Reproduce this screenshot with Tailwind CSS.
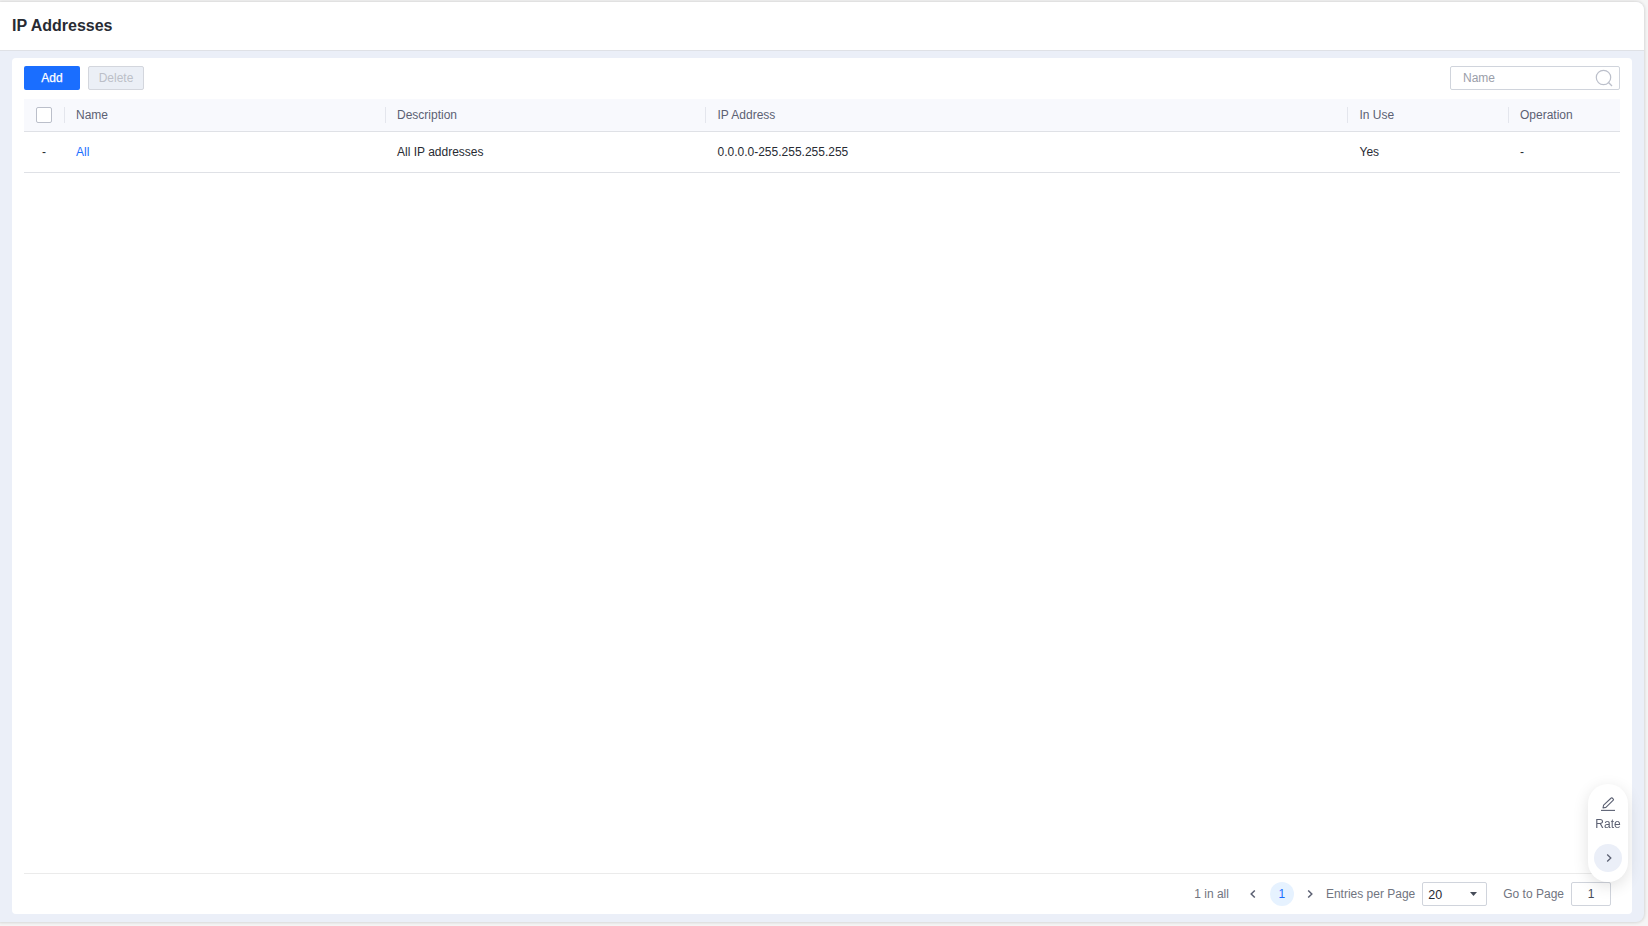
<!DOCTYPE html>
<html lang="en">
<head>
    <meta charset="UTF-8">
    <meta name="viewport" content="width=device-width, initial-scale=1.0">
    <title>IP Addresses</title>
    <script src="https://cdn.jsdelivr.net/npm/@tailwindcss/browser@4"></script>
</head>
<body class="bg-[#f5f5f5] h-screen overflow-hidden font-['Liberation_Sans',Arial,sans-serif] text-xs text-[#282b33]">
    <div class="h-full pt-[2px] pr-[4px] pb-[4px]">
        <div class="h-full flex flex-col bg-[#ebeff8] rounded-r-lg overflow-hidden shadow-[0_0_3px_1px_rgba(0,0,0,0.12)]">
            <header class="h-[49px] shrink-0 bg-white border-b border-[#dfe1e6] flex items-center pl-3">
                <h1 class="text-base font-bold leading-5">IP Addresses</h1>
            </header>

            <main class="flex-1 mt-[7px] ml-3 mr-3 mb-2 bg-white rounded flex flex-col px-3 pt-2">
                <!-- Toolbar -->
                <div class="flex items-center gap-2 h-6 shrink-0">
                    <button class="w-14 h-6 bg-[#1a6eff] text-white rounded-[2px] [-webkit-text-stroke:0.25px_white]">Add</button>
                    <button class="w-14 h-6 bg-[#ebeff6] border border-[#d3d6dd] text-[#bcbfc8] rounded-[2px]" disabled>Delete</button>
                    <div class="ml-auto w-[170px] h-6 border border-[#d0d4dc] rounded-[2px] flex items-center justify-between pl-3 pr-[6px]">
                        <span class="text-[#9a9ea9]">Name</span>
                        <svg class="w-[18px] h-[18px]" viewBox="0 0 18 18" fill="none" stroke="#bbbfca" stroke-width="1.2">
                            <circle cx="8.5" cy="8.5" r="7.2"></circle>
                            <path d="M13 13l4 4"></path>
                        </svg>
                    </div>
                </div>

                <!-- Table -->
                <div class="mt-[9px] grid grid-cols-[40px_321px_320px_642px_161px_112px] items-center h-[33px] shrink-0 bg-[#f8f9fd] border-b border-[#dfe1e6] text-[#5c6173]">
                    <div class="pl-3"><div class="w-4 h-4 bg-white border border-[#bbbfca] rounded-[2px]"></div></div>
                    <div class="h-4 leading-4 border-l border-[#e4e6ed] pl-[11px]">Name</div>
                    <div class="h-4 leading-4 border-l border-[#e4e6ed] pl-[11px]">Description</div>
                    <div class="h-4 leading-4 border-l border-[#e4e6ed] pl-[11.5px]">IP Address</div>
                    <div class="h-4 leading-4 border-l border-[#e4e6ed] pl-[11.5px]">In Use</div>
                    <div class="h-4 leading-4 border-l border-[#e4e6ed] pl-[11px]">Operation</div>
                </div>
                <div class="grid grid-cols-[40px_321px_320px_642px_161px_112px] items-center h-[41px] shrink-0 border-b border-[#dfe1e6]">
                    <div class="text-center">-</div>
                    <div class="pl-3"><a href="#" class="text-[#1a6eff]">All</a></div>
                    <div class="pl-3">All IP addresses</div>
                    <div class="pl-[12.5px]">0.0.0.0-255.255.255.255</div>
                    <div class="pl-[12.5px]">Yes</div>
                    <div class="pl-3">-</div>
                </div>

                <!-- Pagination -->
                <div class="mt-auto h-[41px] shrink-0 border-t border-[#ebebeb] flex items-center justify-end pr-[9px] text-[#71757f]">
                    <span>1 in all</span>
                    <svg class="ml-[21px] w-[6px] h-[8px]" viewBox="0 0 6 8" fill="none" stroke="#5c6173" stroke-width="1.5"><path d="M4.8.5L1.2 4l3.6 3.5"></path></svg>
                    <span class="ml-[14px] w-6 h-6 leading-6 rounded-full bg-[#e6f2ff] text-[#1a6eff] text-center">1</span>
                    <svg class="ml-[13px] w-[6px] h-[8px]" viewBox="0 0 6 8" fill="none" stroke="#5c6173" stroke-width="1.5"><path d="M1.2.5L4.8 4 1.2 7.5"></path></svg>
                    <span class="ml-[13px]">Entries per Page</span>
                    <div class="ml-[7px] w-[65px] h-6 border border-[#d0d4dc] rounded-[2px] flex items-center justify-between pl-[5px] pr-[9px] text-[#282b33]">
                        <span class="text-[12.5px] leading-4 pt-[2px]">20</span>
                        <svg class="w-[7px] h-[4px]" viewBox="0 0 7 4" fill="#464c59"><path d="M0 0h7L3.5 4z"></path></svg>
                    </div>
                    <span class="ml-4">Go to Page</span>
                    <div class="ml-[7px] w-10 h-6 border border-[#d0d4dc] rounded-[2px] text-center leading-[22px] text-[#464c59]">1</div>
                </div>
            </main>
        </div>
    </div>

    <!-- Floating feedback widget -->
    <div class="fixed left-[1588px] top-[784px] w-10 h-[98px] rounded-full bg-white shadow-[0_4px_16px_rgba(0,0,0,0.12)] flex flex-col items-center pt-[13px] text-[#5c6173]">
        <svg class="w-[14px] h-[14px]" viewBox="0 0 14 14" fill="none" stroke="#5c6173" stroke-width="1.1" stroke-linejoin="round">
            <path d="M2 11l.6-2.9L10.2 1q.5-.5 1 0l1.1 1.1q.5.5 0 1L4.9 10.4z"></path>
            <path d="M0 13.4h14"></path>
        </svg>
        <span class="mt-[5px] leading-4">Rate</span>
        <div class="mt-[12px] w-7 h-7 rounded-full bg-[#ebeff8] flex items-center justify-center">
            <svg class="ml-px w-[6px] h-[8px]" viewBox="0 0 6 8" fill="none" stroke="#5c6173" stroke-width="1.3"><path d="M1.2.5L4.8 4 1.2 7.5"></path></svg>
        </div>
    </div>
</body>
</html>
